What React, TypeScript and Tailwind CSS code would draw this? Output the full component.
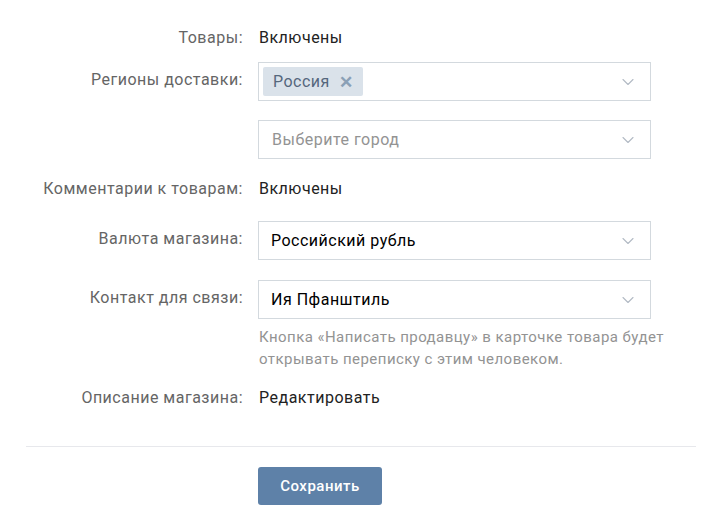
import { ChevronDown } from "lucide-react";

function Select({ children }: { children: React.ReactNode }) {
  return (
    <div className="flex h-[39px] w-[393px] items-center justify-between border border-[#d3d9de] bg-white pl-[4px] pr-[12px]">
      <div className="flex items-center">{children}</div>
      <ChevronDown className="h-5 w-5 text-[#b2bac4]" strokeWidth={1.3} />
    </div>
  );
}

export default function App() {
  return (
    <div
      className="h-[529px] w-[723px] bg-white text-[16px] leading-[20px] tracking-[0.5px] text-[#222]"
      style={{ fontFamily: "Roboto, 'Noto Sans', sans-serif" }}
    >
      <div className="pt-[28px]">
        <div className="flex">
          <div className="w-[243px] text-right text-[#656565]">Товары:</div>
          <div className="ml-[16px]">Включены</div>
        </div>

        <div className="mt-[14px] flex">
          <div className="w-[243px] pt-[8px] text-right text-[#656565]">Регионы доставки:</div>
          <div className="ml-[15px] flex flex-col gap-[19px]">
            <Select>
              <span className="flex h-[29px] items-center gap-[9px] rounded-[2px] bg-[#dae2ea] px-[10px] text-[#55677d]">
                Россия
                <span className="text-[17px] font-bold text-[#8aa0b6]">✕</span>
              </span>
            </Select>
            <Select>
              <span className="pl-[9px] text-[#939393]">Выберите город</span>
            </Select>
          </div>
        </div>

        <div className="mt-[20px] flex">
          <div className="w-[243px] text-right text-[#656565]">Комментарии к товарам:</div>
          <div className="ml-[16px]">Включены</div>
        </div>

        <div className="mt-[22px] flex">
          <div className="w-[243px] pt-[8px] text-right text-[#656565]">Валюта магазина:</div>
          <div className="ml-[15px]">
            <Select>
              <span className="pl-[8px] text-black">Российский рубль</span>
            </Select>
          </div>
        </div>

        <div className="mt-[20px] flex">
          <div className="w-[243px] pt-[8px] text-right text-[#656565]">Контакт для связи:</div>
          <div className="ml-[15px]">
            <Select>
              <span className="pl-[8px] text-black">Ия Пфанштиль</span>
            </Select>
            <p className="mt-[7px] w-[440px] pl-[1px] text-[15px] leading-[22px] tracking-[0.45px] text-[#939393]">
              Кнопка «Написать продавцу» в карточке товара будет открывать переписку с этим человеком.
            </p>
          </div>
        </div>

        <div className="mt-[18px] flex">
          <div className="w-[243px] text-right text-[#656565]">Описание магазина:</div>
          <div className="ml-[16px]">Редактировать</div>
        </div>

        <div className="ml-[26px] mt-[38px] h-px w-[670px] bg-[#e7e8ec]" />

        <div className="ml-[258px] mt-[20px]">
          <button className="h-[38px] w-[124px] rounded-[3px] bg-[#5e81a8] text-[15px] font-medium text-white">
            Сохранить
          </button>
        </div>
      </div>
    </div>
  );
}
